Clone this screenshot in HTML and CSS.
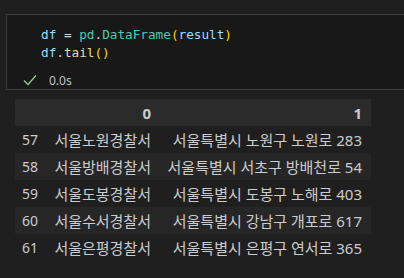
FILE: index.html
```html
<!DOCTYPE html>
<html lang="ko">

<head>
    <meta charset="UTF-8">
    <meta name="viewport" content="width=device-width, initial-scale=1.0">
    <link rel="stylesheet" href="styles.css">
</head>

<body>
    <div class="cell">
        <div class="code">
            <div class="line"><span class="var">df</span> <span class="op">=</span> <span class="cls">pd</span><span class="op">.</span><span class="cls">DataFrame</span><span class="br">(</span><span class="var">result</span><span class="br">)</span></div>
            <div class="line"><span class="var">df</span><span class="op">.</span><span class="fn">tail</span><span class="br">()</span></div>
        </div>
        <div class="status">
            <svg class="check" width="14" height="12" viewBox="0 0 14 12">
                <path d="M1 6.5 L5 10.5 L13 1.5" fill="none" stroke="#89d185" stroke-width="1.3"/>
            </svg>
            <span class="time">0.0s</span>
        </div>
    </div>

    <table class="frame">
        <colgroup>
            <col class="c-idx">
            <col class="c-0">
            <col class="c-1">
        </colgroup>
        <thead>
            <tr>
                <th></th>
                <th>0</th>
                <th>1</th>
            </tr>
        </thead>
        <tbody>
            <tr>
                <td>57</td>
                <td>서울노원경찰서</td>
                <td>서울특별시 노원구 노원로 283</td>
            </tr>
            <tr>
                <td>58</td>
                <td>서울방배경찰서</td>
                <td>서울특별시 서초구 방배천로 54</td>
            </tr>
            <tr>
                <td>59</td>
                <td>서울도봉경찰서</td>
                <td>서울특별시 도봉구 노해로 403</td>
            </tr>
            <tr>
                <td>60</td>
                <td>서울수서경찰서</td>
                <td>서울특별시 강남구 개포로 617</td>
            </tr>
            <tr>
                <td>61</td>
                <td>서울은평경찰서</td>
                <td>서울특별시 은평구 연서로 365</td>
            </tr>
        </tbody>
    </table>
</body>

</html>
```

FILE: styles.css
```css
* {
    box-sizing: border-box;
    margin: 0;
    padding: 0;
}

body {
    background-color: #1f1f1f;
    color: #cccccc;
    font-family: "Noto Sans", "Noto Sans CJK KR", sans-serif;
    overflow: hidden;
}

.cell {
    margin: 14px 0 0 6px;
    height: 76px;
    border: 1px solid #3c3c3c;
    border-right: none;
    background-color: #181818;
}

.code {
    padding: 11px 0 0 34px;
    font-family: "DejaVu Sans Mono", monospace;
    font-size: 12.7px;
    line-height: 18px;
    color: #d4d4d4;
}

.line {
    height: 18px;
    white-space: pre;
}

.var {
    color: #9cdcfe;
}

.cls {
    color: #4ec9b0;
}

.fn {
    color: #dcdcaa;
}

.br {
    color: #ffd700;
}

.op {
    color: #d4d4d4;
}

.status {
    display: flex;
    align-items: center;
    height: 18px;
    margin-top: 9px;
    padding-left: 16px;
    gap: 12px;
}

.time {
    font-size: 12px;
    color: #c0c0c0;
}

.frame {
    margin: 9px 0 0 15px;
    width: 356px;
    border-collapse: collapse;
    table-layout: fixed;
    font-size: 15px;
}

.c-idx {
    width: 31px;
}

.c-0 {
    width: 113px;
}

.c-1 {
    width: 212px;
}

.frame th,
.frame td {
    height: 27px;
    padding: 0 8px 0 0;
    text-align: right;
    white-space: nowrap;
    font-weight: normal;
}

.frame td:first-child {
    font-size: 14px;
}

.frame td:last-child,
.frame th:last-child {
    padding-right: 9px;
}

.frame th {
    font-weight: bold;
    background-color: #2b2b2b;
}

.frame tbody tr:nth-child(even) {
    background-color: #262626;
}
```
